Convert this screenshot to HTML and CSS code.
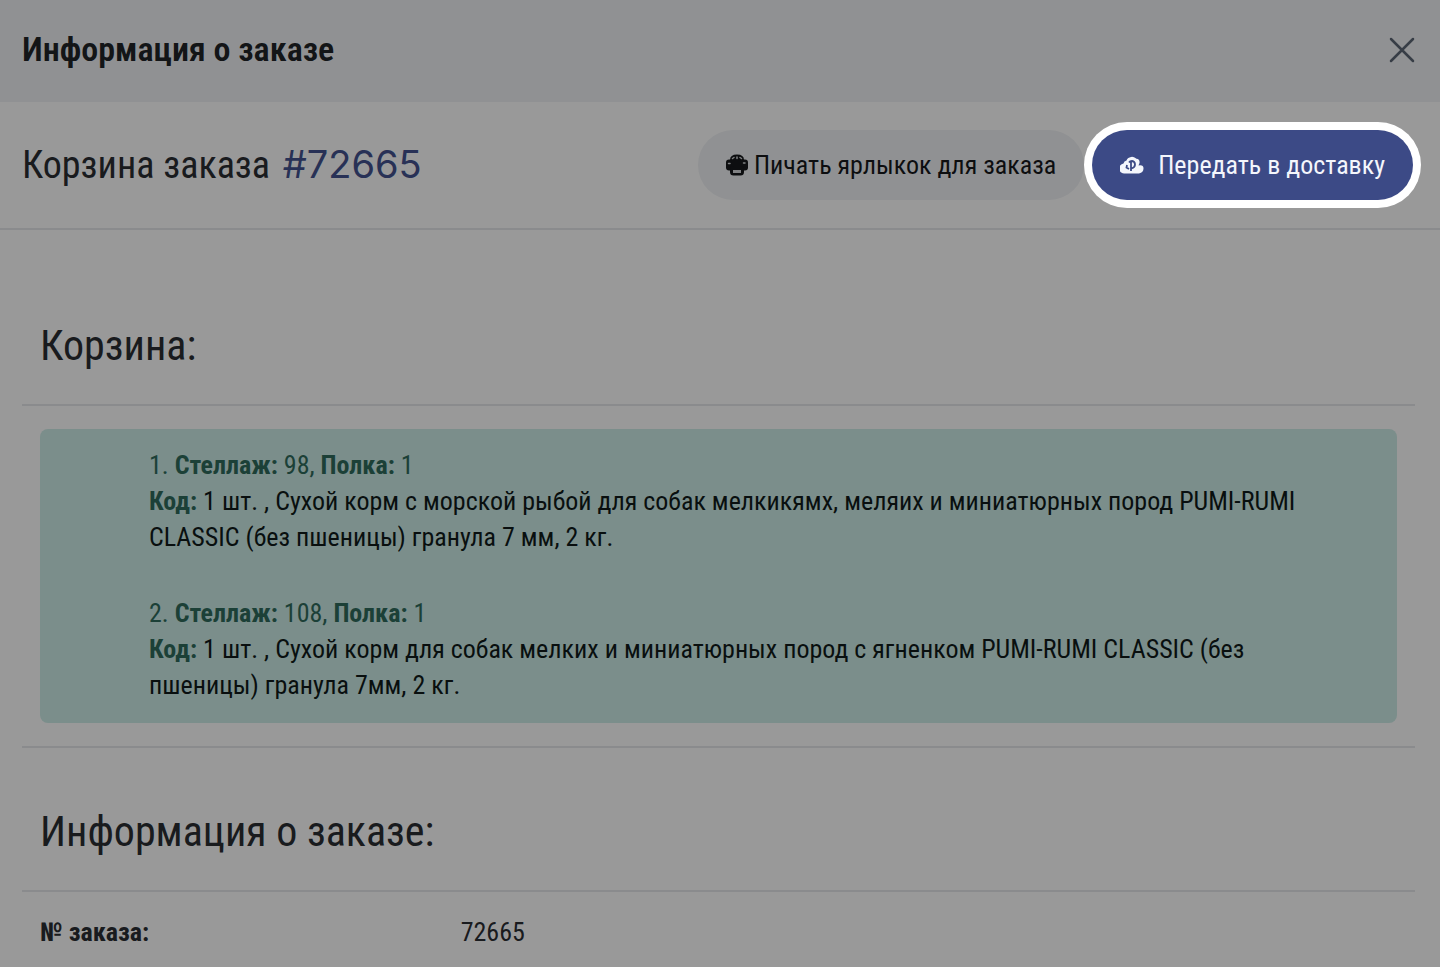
FILE: index.html
```html
<!DOCTYPE html>
<html lang="ru">
<head>
	<meta charset="utf-8">
	<meta name="viewport" content="width=device-width, initial-scale=1">
	<title>Информация о заказе</title>
	<link rel="stylesheet" href="styles.css">
</head>
<body>
	<div class="modal">
		<div class="modal-header">
			<h1 class="modal-title">Информация о заказе</h1>
			<button type="button" class="close" aria-label="Закрыть">
				<svg width="26" height="26" viewBox="0 0 26 26" fill="none" stroke="currentColor" stroke-width="2.500" stroke-linecap="round"><path d="M2 2l22 22M24 2L2 24"/></svg>
			</button>
		</div>
		<div class="order-bar">
			<h2 class="order-title">Корзина заказа <a href="#" class="order-num">#72665</a></h2>
			<div class="actions">
				<button type="button" class="btn btn-light">
					<svg class="icon-print" width="22" height="22" viewBox="0 0 22 22"><path fill="currentColor" d="M4 6Q4 .5 11 .5T18 6z"/><rect x="0" y="5.500" width="22" height="11" rx="3" fill="currentColor"/><rect x="4" y="12" width="14" height="9.500" rx="3.500" fill="currentColor"/><path stroke="#d5d7da" stroke-width="1.500" stroke-linecap="round" fill="none" d="M6.500 4.500l1.500-1M11 4.500V3M15.500 4.500l-1.500-1M2.500 9.500H4M17.500 9H19"/><path fill="#d5d7da" d="M7 16h8v3H7z"/></svg>
					<span>Пичать ярлыкок для заказа</span>
				</button>
				<button type="button" class="btn btn-primary">
					<svg class="icon-cloud" width="24" height="18" viewBox="0 0 24 18"><path fill="currentColor" d="M5 17.500A5 5 0 0 1 3.500 7.500Q4 5 6.500 4.500A6 6 0 0 1 16.500 2.800Q20 3 19.500 7L18.500 9.500Q23.500 8.500 23.500 12.500T19 17.500z"/><path fill="none" stroke="#3c4a86" stroke-width="1.800" d="M11 15V6M7 9l-.5 2.500L9 13M9 6.500Q10 5 12 5q3 .5 3 3.500t-3.500 4"/></svg>
					<span>Передать в доставку</span>
				</button>
			</div>
		</div>
		<div class="modal-body">
			<h3 class="section-title">Корзина:</h3>
			<div class="cart">
				<ul class="cart-list">
					<li>
						<p class="place">1. <b>Стеллаж:</b> 98, <b>Полка:</b> 1</p>
						<p><b>Код:</b> 1 шт. , Сухой корм с морской рыбой для собак мелкикямх, меляих и миниатюрных пород PUMI-RUMI CLASSIC (без пшеницы) гранула 7 мм, 2 кг.</p>
					</li>
					<li>
						<p class="place">2. <b>Стеллаж:</b> 108, <b>Полка:</b> 1</p>
						<p><b>Код:</b> 1 шт. , Сухой корм для собак мелких и миниатюрных пород с ягненком PUMI-RUMI CLASSIC (без пшеницы) гранула 7мм, 2 кг.</p>
					</li>
				</ul>
			</div>
			<h3 class="section-title">Информация о заказе:</h3>
			<dl class="info">
				<dt>№ заказа:</dt>
				<dd>72665</dd>
			</dl>
		</div>
	</div>
</body>
</html>
```

FILE: styles.css
```css
*{
	box-sizing: border-box;
	padding: 0;
	margin: 0;
}
body{
	background-color: #fff;
	color: #2b2e33;
	font-family: "Roboto Condensed", Roboto, "Liberation Sans", sans-serif;
	font-size: 26px;
	line-height: 36px;
}
ul{
	list-style: none;
}
button{
	border: 0;
	background: none;
	font: inherit;
	cursor: pointer;
}
.modal{
	min-height: 100vh;
	overflow: hidden;
}
.modal-header{
	display: flex;
	align-items: center;
	justify-content: space-between;
	padding: 28px 25px 30px 22px;
	background-color: #f0f2f5;
}
.modal-title{
	padding-bottom: 2px;
	font-size: 34px;
	line-height: 42px;
	font-weight: 600;
	color: #202327;
}
.close{
	display: flex;
	color: #5c6675;
}
.order-bar{
	display: flex;
	align-items: center;
	justify-content: space-between;
	padding: 28px 27px 28px 22px;
	border-bottom: 2px solid #e6e8eb;
}
.order-title{
	padding-bottom: 2px;
	font-size: 38px;
	line-height: 42px;
	font-weight: 400;
}
.order-num{
	margin-left: 4px;
	font-family: Inter, sans-serif;
	color: #43538f;
	text-decoration: none;
}
.actions{
	display: flex;
	gap: 8px;
}
.btn{
	display: flex;
	align-items: center;
	height: 70px;
	padding: 0 28px;
	border-radius: 35px;
	white-space: nowrap;
}
.btn-light{
	gap: 6px;
	background-color: #f0f2f5;
	color: #16181b;
}
/* highlighted step: white ring, everything else is dimmed */
.btn-primary{
	position: relative;
	z-index: 10;
	gap: 14px;
	background-color: #3c4a86;
	color: #f4f6fc;
	box-shadow: 0 0 0 8px #fff, 0 0 0 4000px rgba(0, 0, 0, .4);
}
.modal-body{
	padding: 32px 25px 0 22px;
}
.section-title{
	padding: 60px 18px 34px;
	border-bottom: 2px solid #e6e8eb;
	font-size: 42px;
	line-height: 48px;
	font-weight: 400;
}
.cart{
	padding: 23px 18px;
	border-bottom: 2px solid #e6e8eb;
}
.cart-list{
	display: flex;
	flex-direction: column;
	gap: 40px;
	padding: 18px 80px 20px 109px;
	border-radius: 8px;
	background-color: #cdede8;
	color: #0f1a19;
}
.cart-list b,
.place{
	color: #2f6c5d;
}
.info{
	display: grid;
	grid-template-columns: 31% 1fr;
	padding: 22px 18px 0;
}
.info dt{
	font-weight: 700;
}
```
